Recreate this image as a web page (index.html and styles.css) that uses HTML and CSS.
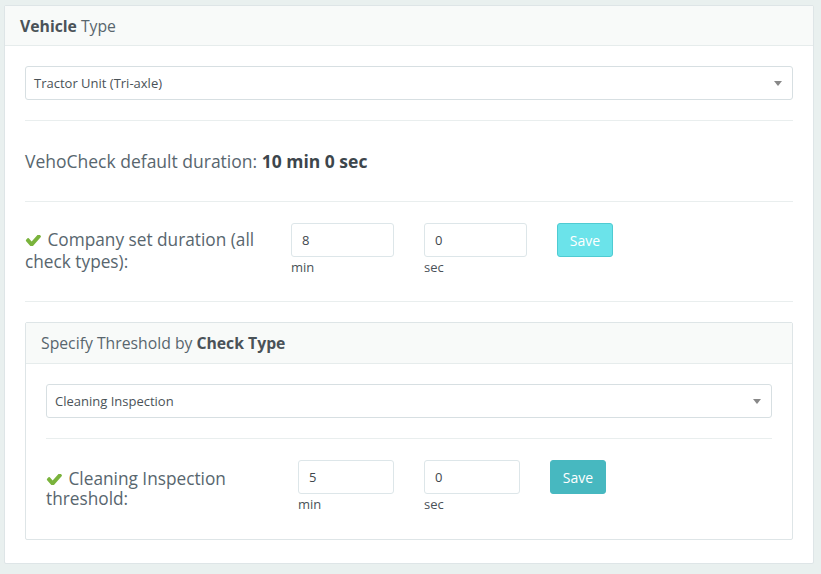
FILE: index.html
```html
<!DOCTYPE html>
<html>
<head>
<meta charset="utf-8">
<link rel="stylesheet" href="styles.css">
</head>
<body>
<div class="panel">
  <div class="panel-heading"><b>Vehicle</b> Type</div>
  <div class="panel-body">
    <div class="select">
      <span>Tractor Unit (Tri-axle)</span>
      <span class="caret"></span>
    </div>
    <hr class="sep">
    <div class="default-line">VehoCheck default duration: <b>10 min 0 sec</b></div>
    <hr class="sep">
    <div class="row">
      <div class="col col-label">
        <div class="label">
          <svg class="check" viewBox="30 420 1650 1010" preserveAspectRatio="none"><path d="M1671 566q0 40-28 68l-724 724-136 136q-28 28-68 28t-68-28l-136-136-362-362q-28-28-28-68t28-68l136-136q28-28 68-28t68 28l294 295 656-657q28-28 68-28t68 28l136 136q28 28 28 68z"/></svg>
          Company set duration (all check types):
        </div>
      </div>
      <div class="col col-input">
        <div class="input">8</div>
        <div class="unit">min</div>
      </div>
      <div class="col col-input">
        <div class="input">0</div>
        <div class="unit">sec</div>
      </div>
      <div class="col col-btn">
        <button class="btn btn-disabled">Save</button>
      </div>
    </div>
    <hr class="sep">
    <div class="panel inner">
      <div class="panel-heading inner-heading">Specify Threshold by <b>Check Type</b></div>
      <div class="panel-body inner-body">
        <div class="select">
          <span>Cleaning Inspection</span>
          <span class="caret"></span>
        </div>
        <hr class="sep">
        <div class="row">
          <div class="col col-label">
            <div class="label label-tight">
              <svg class="check" viewBox="30 420 1650 1010" preserveAspectRatio="none"><path d="M1671 566q0 40-28 68l-724 724-136 136q-28 28-68 28t-68-28l-136-136-362-362q-28-28-28-68t28-68l136-136q28-28 68-28t68 28l294 295 656-657q28-28 68-28t68 28l136 136q28 28 28 68z"/></svg>
              Cleaning Inspection threshold:
            </div>
          </div>
          <div class="col col-input">
            <div class="input">5</div>
            <div class="unit">min</div>
          </div>
          <div class="col col-input">
            <div class="input">0</div>
            <div class="unit">sec</div>
          </div>
          <div class="col col-btn">
            <button class="btn btn-info">Save</button>
          </div>
        </div>
      </div>
    </div>
  </div>
</div>
</body>
</html>
```
FILE: styles.css
```css
* { box-sizing: border-box; }
html, body {
  margin: 0;
  padding: 0;
  background: #e9f0ef;
  font-family: "Open Sans", "Liberation Sans", sans-serif;
  color: #58666e;
}
body {
  padding: 5px 7px 0 4px;
  height: 574px;
  overflow: hidden;
}
.panel {
  background: #fff;
  border: 1px solid #dee5e7;
  border-radius: 2px;
}
.panel-heading {
  height: 40px;
  padding: 0 15px;
  display: flex;
  align-items: center;
  font-size: 15.75px;
  background: #f8faf9;
  border-bottom: 1px solid #e6ecec;
}
.panel-heading b { font-weight: 700; color: #4a5258; margin-right: 4px; }
.inner-heading b { margin-left: 4px; margin-right: 0; }
.panel-body {
  padding: 20px;
}
.inner-body {
  padding-bottom: 21px;
}
.select {
  height: 34px;
  border: 1px solid #d7dfe2;
  border-radius: 3px;
  display: flex;
  align-items: center;
  justify-content: space-between;
  padding: 0 10px 0 8px;
  font-size: 13px;
  color: #4a5258;
}
.caret {
  width: 0;
  height: 0;
  border-left: 4px solid transparent;
  border-right: 4px solid transparent;
  border-top: 5px solid #888;
}
.sep {
  border: 0;
  border-top: 1px solid #e9eeee;
  margin: 20px 0;
}
.default-line {
  font-size: 17.5px;
  line-height: 24px;
  margin: 28px 0;
}
.default-line b { font-weight: 700; color: #3d464c; }
.row {
  display: flex;
  margin: 0 -15px;
  padding: 1px 0 5px;
}
.col {
  padding: 0 15px;
}
.col-label { width: 33.3333%; }
.col-input { width: 16.6667%; }
.col-btn { width: 16.6667%; }
.label {
  font-size: 17.25px;
  line-height: 22px;
  padding-top: 6px;
}
.label-tight {
  line-height: 20px;
  padding-top: 9px;
}
.check {
  width: 16px;
  height: 11px;
  fill: #7ab33c;
  vertical-align: 0;
  margin-right: 2px;
}
.input {
  height: 34px;
  border: 1px solid #dde6e9;
  border-radius: 3px;
  padding: 0 10px;
  display: flex;
  align-items: center;
  font-size: 13px;
  color: #3f474d;
}
.unit {
  font-size: 13px;
  margin-top: 1px;
  line-height: 18px;
  color: #4a5258;
}
.btn {
  height: 34px;
  width: 56px;
  border-radius: 3px;
  font-family: inherit;
  font-size: 14px;
  color: #fff;
  padding: 0;
}
.btn-disabled {
  background: #6be3ea;
  border: 1px solid #4fcbd2;
}
.btn-info {
  background: #47b8c0;
  border: 1px solid #47b8c0;
}
.inner {
  margin-top: 20px;
  margin-bottom: 3px;
}
.inner .panel-heading {
  height: 41px;
}
```
